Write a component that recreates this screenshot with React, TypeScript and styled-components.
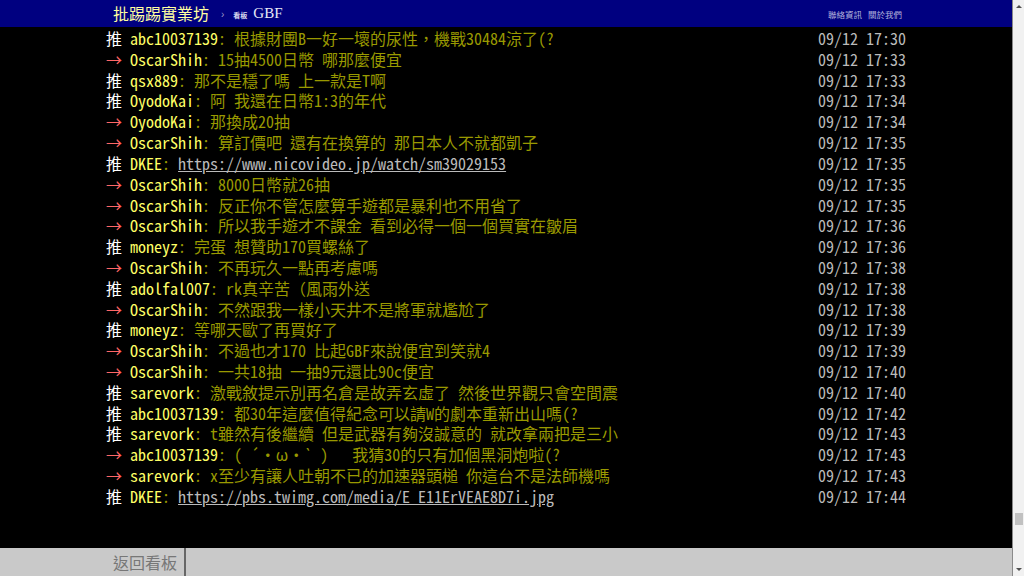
import styled, { createGlobalStyle } from "styled-components";

const GlobalStyle = createGlobalStyle`
  html, body {
    margin: 0;
    padding: 0;
    background: #000;
    overflow: hidden;
  }
`;

const MONO = `"Noto Sans Mono CJK TC", "Noto Sans CJK TC", "Liberation Mono", monospace`;

interface Push {
  tag: "推" | "→";
  user: string;
  text: string;
  time: string;
  link?: boolean;
}

const pushes: Push[] = [
  { tag: "推", user: "abc10037139", text: "根據財團B一好一壞的尿性，機戰30484涼了(?", time: "09/12 17:30" },
  { tag: "→", user: "OscarShih", text: "15抽4500日幣 哪那麼便宜", time: "09/12 17:33" },
  { tag: "推", user: "qsx889", text: "那不是穩了嗎 上一款是T啊", time: "09/12 17:33" },
  { tag: "推", user: "OyodoKai", text: "阿 我還在日幣1:3的年代", time: "09/12 17:34" },
  { tag: "→", user: "OyodoKai", text: "那換成20抽", time: "09/12 17:34" },
  { tag: "→", user: "OscarShih", text: "算訂價吧 還有在換算的 那日本人不就都凱子", time: "09/12 17:35" },
  { tag: "推", user: "DKEE", text: "https://www.nicovideo.jp/watch/sm39029153", time: "09/12 17:35", link: true },
  { tag: "→", user: "OscarShih", text: "8000日幣就26抽", time: "09/12 17:35" },
  { tag: "→", user: "OscarShih", text: "反正你不管怎麼算手遊都是暴利也不用省了", time: "09/12 17:35" },
  { tag: "→", user: "OscarShih", text: "所以我手遊才不課金 看到必得一個一個買實在皺眉", time: "09/12 17:36" },
  { tag: "推", user: "moneyz", text: "完蛋 想贊助170買螺絲了", time: "09/12 17:36" },
  { tag: "→", user: "OscarShih", text: "不再玩久一點再考慮嗎", time: "09/12 17:38" },
  { tag: "推", user: "adolfal007", text: "rk真辛苦（風雨外送", time: "09/12 17:38" },
  { tag: "→", user: "OscarShih", text: "不然跟我一樣小天井不是將軍就尷尬了", time: "09/12 17:38" },
  { tag: "推", user: "moneyz", text: "等哪天歐了再買好了", time: "09/12 17:39" },
  { tag: "→", user: "OscarShih", text: "不過也才170 比起GBF來說便宜到笑就4", time: "09/12 17:39" },
  { tag: "→", user: "OscarShih", text: "一共18抽 一抽9元還比90c便宜", time: "09/12 17:40" },
  { tag: "推", user: "sarevork", text: "激戰敘提示別再名倉是故弄玄虛了 然後世界觀只會空間震", time: "09/12 17:40" },
  { tag: "推", user: "abc10037139", text: "都30年這麼值得紀念可以請W的劇本重新出山嗎(?", time: "09/12 17:42" },
  { tag: "推", user: "sarevork", text: "t雖然有後繼續 但是武器有夠沒誠意的 就改拿兩把是三小", time: "09/12 17:43" },
  { tag: "→", user: "abc10037139", text: "( ´・ω・` )   我猜30的只有加個黑洞炮啦(?", time: "09/12 17:43" },
  { tag: "→", user: "sarevork", text: "x至少有讓人吐朝不已的加速器頭槌 你這台不是法師機嗎", time: "09/12 17:43" },
  { tag: "推", user: "DKEE", text: "https://pbs.twimg.com/media/E_E11ErVEAE8D7i.jpg", time: "09/12 17:44", link: true },
];

const Page = styled.div`
  display: flex;
  width: 1024px;
  height: 576px;
`;

const Main = styled.div`
  flex: 1;
  display: flex;
  flex-direction: column;
  min-width: 0;
`;

const TopBar = styled.div`
  height: 27px;
  background: #000080;
  flex-shrink: 0;
`;

const BarInner = styled.div`
  width: 800px;
  height: 100%;
  margin: 0 auto;
  display: flex;
  align-items: center;
  box-sizing: border-box;
`;

const TopInner = styled(BarInner)`
  padding: 0 4px 0 7px;
`;

const Logo = styled.span`
  color: #ffffa0;
  font-family: ${MONO};
  font-size: 16px;
  margin-top: -2px;
`;

const Crumb = styled.span`
  color: #9a9ac8;
  font-family: "Liberation Sans", sans-serif;
  font-size: 10px;
  margin: 2px 9px 0 12px;
`;

const BoardLabel = styled.span`
  color: #d8d8ee;
  font-family: "Noto Sans CJK TC", sans-serif;
  font-size: 7px;
  font-weight: bold;
  margin: 2px 6px 0 0;
`;

const BoardName = styled.span`
  color: #e8e8f8;
  font-family: "Liberation Serif", serif;
  font-size: 15px;
  margin-top: -1px;
`;

const TopLinks = styled.div`
  margin-left: auto;
  display: flex;
  gap: 6px;
  color: #b4b4dc;
  font-family: "Noto Sans CJK TC", sans-serif;
  font-size: 8.5px;
  margin-top: 1px;
`;

const Content = styled.div`
  flex: 1;
  background: #000;
  overflow: hidden;
`;

const PushList = styled.div`
  width: 800px;
  margin: 0 auto;
  padding-top: 1px;
  font-family: ${MONO};
  font-size: 16px;
  line-height: 20.82px;
`;

const Row = styled.div`
  display: flex;
  white-space: pre;
`;

const Tag = styled.span<{ $arrow: boolean }>`
  color: ${(p) => (p.$arrow ? "#f66" : "#fff")};
`;

const UserId = styled.span`
  color: #ff6;
`;

const Text = styled.span`
  color: #990;
`;

const Link = styled.a`
  color: #bbb;
  text-decoration: underline;
`;

const Time = styled.span`
  margin-left: auto;
  color: #bbb;
`;

const BottomBar = styled.div`
  height: 28px;
  background: #c9c9c9;
  flex-shrink: 0;
`;

const BackButton = styled.div`
  width: 78px;
  height: 100%;
  border-right: 2px solid #666;
  display: flex;
  align-items: center;
  justify-content: center;
  color: #777;
  font-family: "Noto Sans CJK TC", sans-serif;
  font-size: 16px;
`;

const ScrollTrack = styled.div`
  width: 11px;
  border-left: 1px solid #8a8a8a;
  background: #f1f1f1;
  display: flex;
  flex-direction: column;
  align-items: center;
`;

const ScrollArrow = styled.div<{ $down?: boolean }>`
  width: 0;
  height: 0;
  border-left: 3px solid transparent;
  border-right: 3px solid transparent;
  ${(p) =>
    p.$down
      ? "border-top: 3px solid #505050; margin: 43px 0 5px;"
      : "border-bottom: 3px solid #505050; margin-top: 5px;"}
`;

const ScrollThumb = styled.div`
  width: 8px;
  height: 12px;
  background: #c1c1c1;
  margin-top: auto;
`;

export default function App() {
  return (
    <Page>
      <GlobalStyle />
      <Main>
        <TopBar>
          <TopInner>
            <Logo>批踢踢實業坊</Logo>
            <Crumb>›</Crumb>
            <BoardLabel>看板</BoardLabel>
            <BoardName>GBF</BoardName>
            <TopLinks>
              <span>聯絡資訊</span>
              <span>關於我們</span>
            </TopLinks>
          </TopInner>
        </TopBar>
        <Content>
          <PushList>
            {pushes.map((p, i) => (
              <Row key={`push_${i}`}>
                <Tag $arrow={p.tag === "→"}>{p.tag + " "}</Tag>
                <UserId>{p.user}</UserId>
                <Text>
                  {": "}
                  {p.link ? <Link href={p.text}>{p.text}</Link> : p.text}
                </Text>
                <Time>{" " + p.time}</Time>
              </Row>
            ))}
          </PushList>
        </Content>
        <BottomBar>
          <BarInner>
            <BackButton>返回看板</BackButton>
          </BarInner>
        </BottomBar>
      </Main>
      <ScrollTrack>
        <ScrollArrow />
        <ScrollThumb />
        <ScrollArrow $down />
      </ScrollTrack>
    </Page>
  );
}
